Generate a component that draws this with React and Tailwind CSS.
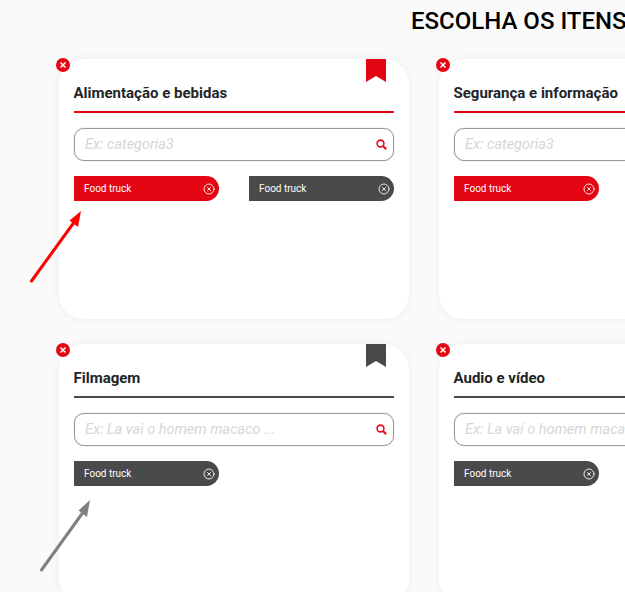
import { CircleX } from "lucide-react";

const CARDS = [
  {
    title: "Alimentação e bebidas",
    placeholder: "Ex: categoria3",
    accent: "red",
    bookmark: true,
    chips: ["red", "dark"],
  },
  {
    title: "Segurança e informação",
    placeholder: "Ex: categoria3",
    accent: "red",
    chips: ["red"],
  },
  {
    title: "Filmagem",
    placeholder: "Ex: La vai o homem macaco ...",
    accent: "dark",
    bookmark: true,
    chips: ["dark"],
  },
  {
    title: "Audio e vídeo",
    placeholder: "Ex: La vai o homem macaco ...",
    accent: "dark",
    chips: ["dark"],
  },
];

function Chip({ color }) {
  return (
    <div
      className={`flex h-[25px] items-center justify-between rounded-r-full pl-[10px] pr-[4px] text-[10px] font-normal text-white ${
        color === "red" ? "bg-[#e30613]" : "bg-[#4a4a4a]"
      }`}
    >
      <span>Food truck</span>
      <CircleX className="h-[12px] w-[12px]" strokeWidth={1.75} />
    </div>
  );
}

function Card({ card }) {
  const isRed = card.accent === "red";
  return (
    <div className="relative h-[260px] rounded-[25px] bg-white px-[15px] shadow-[0_0_10px_rgba(0,0,0,0.06)]">
      <button className="absolute left-[-3px] top-[-1px] flex h-[14px] w-[14px] items-center justify-center rounded-full bg-[#e30613]">
        <svg width="8" height="8" viewBox="0 0 8 8">
          <path d="M1.5 1.5 6.5 6.5M6.5 1.5 1.5 6.5" stroke="#fff" strokeWidth="1.5" />
        </svg>
      </button>
      {card.bookmark && (
        <svg className="absolute right-[23px] top-0" width="20" height="23" viewBox="0 0 20 23">
          <path d="M0 0H20V23L10 17 0 23Z" fill={isRed ? "#e30613" : "#4a4a4a"} />
        </svg>
      )}
      <h2
        className={`flex h-[54px] items-end border-b-2 pb-[7px] text-[15px] font-bold leading-[22px] text-[#212529] ${
          isRed ? "border-[#e30613]" : "border-[#4a4a4a]"
        }`}
      >
        <span className="ml-[-0.5px]">{card.title}</span>
      </h2>
      <div className="mt-[15px] flex h-[33px] items-center rounded-[10px] border border-[#999] pl-[10px] pr-[6px] shadow-[0_0_1px_#999]">
        <input
          readOnly
          placeholder={card.placeholder}
          className="min-w-0 flex-1 truncate bg-transparent text-[14.5px] italic outline-none placeholder:text-[#d6d6d6]"
        />
        <svg width="11" height="11" viewBox="0 0 11 11" fill="none" stroke="#e9081a">
          <circle cx="4.5" cy="4.5" r="3.4" strokeWidth="1.6" />
          <path d="M7 7 10.2 10.2" strokeWidth="2" />
        </svg>
      </div>
      <div className="mt-[15px] grid grid-cols-[145px_145px] gap-x-[30px]">
        {card.chips.map((color, i) => (
          <Chip key={i} color={color} />
        ))}
      </div>
    </div>
  );
}

function Arrow({ className, color, line, head }) {
  return (
    <svg className={`absolute ${className}`} width="70" height="80" viewBox="0 0 70 80">
      <path d={line} stroke={color} strokeWidth="3" strokeLinecap="round" />
      <path d={head} fill={color} />
    </svg>
  );
}

export default function App() {
  return (
    <div className="relative h-[592px] w-[625px] overflow-hidden bg-[#fafafa] font-['Roboto',sans-serif]">
      <h1 className="h-[59px] whitespace-nowrap pl-[411px] pt-[6px] text-[24px] font-medium leading-[30px] text-black">
        ESCOLHA OS ITENS
      </h1>
      <div className="grid w-max grid-cols-[350px_350px] gap-x-[30px] gap-y-[25px] pl-[59px]">
        {CARDS.map((card) => (
          <Card key={card.title} card={card} />
        ))}
      </div>
      <Arrow
        className="left-[25px] top-[206px]"
        color="#ff0000"
        line="M6.5 75 50 15"
        head="M56 5 53 21 44.5 14.5Z"
      />
      <Arrow
        className="left-[35px] top-[495px]"
        color="#808080"
        line="M6.5 75 49 16"
        head="M55 5 52 22 43.5 15.5Z"
      />
    </div>
  );
}
